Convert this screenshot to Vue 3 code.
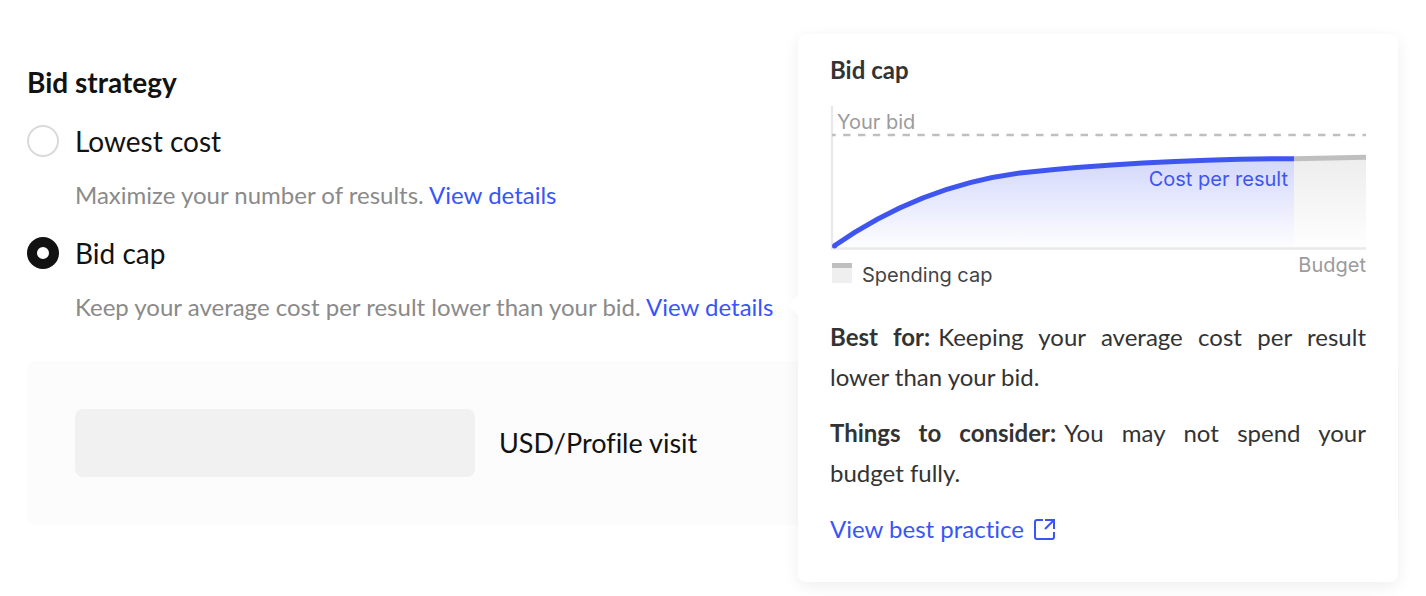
<script setup>
import { ref } from 'vue'

const strategy = ref('bid-cap')
const bid = ref('')
const options = [
  { value: 'lowest-cost', label: 'Lowest cost', hint: 'Maximize your number of results.' },
  { value: 'bid-cap', label: 'Bid cap', hint: 'Keep your average cost per result lower than your bid.' },
]
</script>

<template>
  <main class="page">
    <fieldset class="strategy">
      <legend class="heading">Bid strategy</legend>
      <div v-for="option in options" :key="option.value" class="option">
        <label class="choice">
          <input v-model="strategy" class="radio" type="radio" name="strategy" :value="option.value" />
          <span>{{ option.label }}</span>
        </label>
        <p class="hint">{{ option.hint }} <a class="link" href="#details">View details</a></p>
      </div>
    </fieldset>

    <div class="panel">
      <input id="bid" v-model="bid" class="amount" type="text" />
      <label class="unit" for="bid">USD/Profile visit</label>
    </div>

    <aside class="popover">
      <h2 class="title">Bid cap</h2>
      <svg class="chart" viewBox="0 0 536 195" role="img" aria-label="Cost per result compared with your bid">
        <defs>
          <linearGradient id="blueFill" x1="0" y1="52" x2="0" y2="141" gradientUnits="userSpaceOnUse">
            <stop offset="0" stop-color="#d2d7fb" />
            <stop offset="1" stop-color="#fdfdff" />
          </linearGradient>
          <linearGradient id="greyFill" x1="0" y1="52" x2="0" y2="141" gradientUnits="userSpaceOnUse">
            <stop offset="0" stop-color="#ededed" />
            <stop offset="1" stop-color="#fefefe" />
          </linearGradient>
        </defs>
        <path d="M4 140C60 101 124 75.5 190 67C270 58.5 370 53 464 52.7V142H4Z" fill="url(#blueFill)" />
        <path d="M464 52.7L536 51.3V142H464Z" fill="url(#greyFill)" />
        <path d="M2 0V142.5H536" fill="none" stroke="#e9e9e9" stroke-width="2.4" />
        <path d="M2 29H536" stroke="#bfbfbf" stroke-width="2.4" stroke-dasharray="7.42 7.42" stroke-dashoffset="3.7" />
        <path d="M464 52.7L536 51.3" stroke="#bfbfbf" stroke-width="5" />
        <path d="M464 52.7C370 53 270 58.5 190 67C124 75.5 60 101 4 140" fill="none" stroke="#3f55f0" stroke-width="5" />
        <circle cx="4.5" cy="140" r="2.5" fill="#3f55f0" />
        <text class="muted" x="7" y="23">Your bid</text>
        <text class="blue" x="458" y="80" text-anchor="end">Cost per result</text>
        <text class="muted" x="536" y="166" text-anchor="end">Budget</text>
        <rect x="2" y="157" width="20" height="20" fill="#efefef" />
        <rect x="2" y="157" width="20" height="5" fill="#bfbfbf" />
        <text class="dark" x="32" y="176">Spending cap</text>
      </svg>
      <p class="note"><strong>Best for:</strong>Keeping your average cost per result lower than your bid.</p>
      <p class="note"><strong>Things to consider:</strong>You may not spend your budget fully.</p>
      <a class="link practice" href="#best-practice">
        View best practice
        <svg class="external" viewBox="0 0 22 22" fill="none" stroke="currentColor" stroke-width="2" aria-hidden="true">
          <path d="M9 2H3Q1 2 1 4V19Q1 21 3 21H18Q20 21 20 19V14" />
          <path d="M11 2H20V11M20 2L11 11" />
        </svg>
      </a>
    </aside>
  </main>
</template>

<style>
body {
  margin: 0;
  background: #fff;
}
</style>

<style scoped>
.page {
  position: relative;
  box-sizing: border-box;
  min-height: 100vh;
  padding: 62px 27px 32px;
  font-family: Lato, "Open Sans", sans-serif;
  font-size: 28px;
  font-variant-ligatures: none;
  line-height: 32px;
  color: #121212;
}
.strategy {
  margin: 0;
  padding: 0;
  border: 0;
}
.heading {
  padding: 0;
  font-size: 28px;
  line-height: 40px;
  font-weight: 700;
}
.option {
  padding-top: 23px;
}
.option + .option {
  padding-top: 22px;
}
.choice {
  display: flex;
  align-items: center;
  gap: 16px;
}
.radio {
  appearance: none;
  box-sizing: border-box;
  width: 32px;
  height: 32px;
  margin: 0;
  border: 2px solid #d9d9d9;
  border-radius: 50%;
  background: #fff;
}
.radio:checked {
  border: 10px solid #121212;
}
.hint {
  margin: 18px 0 0 48px;
  font-size: 24px;
  line-height: 40px;
  color: #8a8a8a;
}
.link {
  color: #3955f6;
  text-decoration: none;
}
.panel {
  display: flex;
  align-items: center;
  gap: 24px;
  margin-top: 34px;
  padding: 48px;
  border-radius: 8px;
  background: #fcfcfc;
}
.amount {
  box-sizing: border-box;
  width: 400px;
  height: 68px;
  padding: 0 16px;
  border: 0;
  border-radius: 8px;
  background: #f1f1f1;
  font: inherit;
  color: inherit;
}
.unit {
  font-size: 27px;
}
.popover {
  position: absolute;
  top: 34px;
  right: 28px;
  box-sizing: border-box;
  width: 600px;
  padding: 16px 32px 33px;
  border-radius: 8px;
  background: #fff;
  box-shadow: 0 4px 16px rgba(0, 0, 0, 0.07);
  font-size: 24px;
  line-height: 40px;
  color: #333;
}
.popover::before {
  content: "";
  position: absolute;
  top: 264px;
  left: -7px;
  width: 14px;
  height: 14px;
  background: #fff;
  transform: rotate(45deg);
}
.title {
  margin: 0 0 16px;
  font-size: 24px;
  line-height: 40px;
  font-weight: 700;
}
.chart {
  display: block;
  width: 100%;
  font-family: Inter, "Liberation Sans", sans-serif;
  font-size: 20px;
}
.muted {
  fill: #9b9b9b;
}
.blue {
  fill: #3f55f0;
}
.dark {
  fill: #444;
}
.note {
  margin: 16px 0 0;
  text-align: justify;
}
.note strong {
  margin-right: 8px;
}
.practice {
  display: flex;
  align-items: center;
  gap: 10px;
  margin-top: 16px;
}
.external {
  width: 22px;
  height: 22px;
}
</style>
